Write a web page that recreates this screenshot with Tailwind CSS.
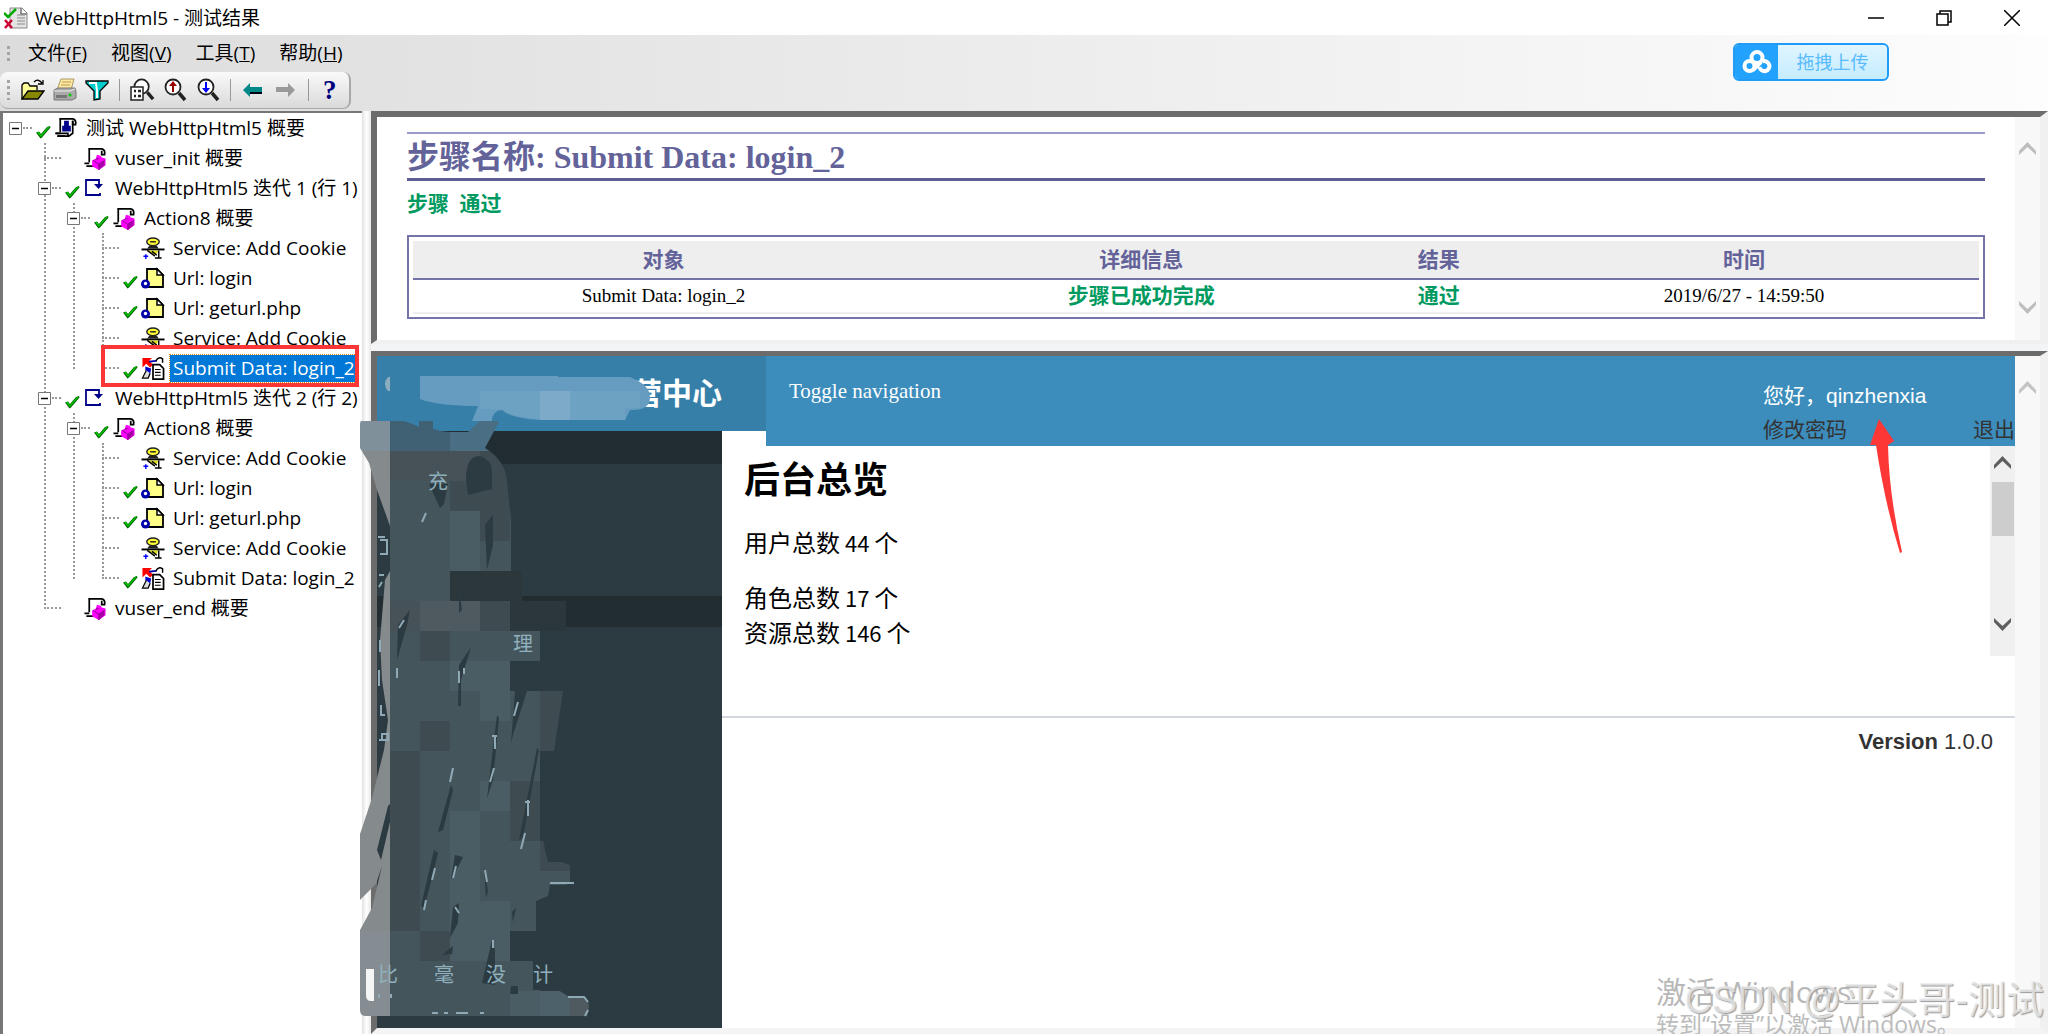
<!DOCTYPE html>
<html lang="zh-CN">
<head>
<meta charset="utf-8">
<title>WebHttpHtml5 - 测试结果</title>
<script src="https://cdn.jsdelivr.net/npm/@tailwindcss/browser@4"></script>
</head>
<body class="h-screen flex flex-col overflow-hidden relative bg-gray-100 text-black font-['Open_Sans','Noto_Sans_CJK_SC',sans-serif]">

<svg class="hidden" aria-hidden="true">
  <symbol id="check" viewBox="0 0 15 13"><path d="M0 6.500l3-1 2 2.500 6-7 3-1 .5 1.500-8.500 10-1.500 1z" fill="#060"/><path d="M1 6.200l2-.2 2 3 7-8 2-.5-9 10.500z" fill="#0c0"/></symbol>
  <symbol id="scroll" viewBox="0 0 24 24"><path d="M6 2h11v15H6z" fill="#fff"/><path d="M6 2v14M5 2h14q4 1 3 6h-3V4M1 17h5M3 20h8" fill="none" stroke="#000" stroke-width="1.800"/></symbol>
  <symbol id="run" viewBox="0 0 24 24"><use href="#scroll"/><path d="M10 4h5v5h2v6H8V9h2z" fill="#00008b"/><path d="M19 4v13l-4 3H3M1 17h13v3" fill="none" stroke="#000" stroke-width="1.800"/></symbol>
  <symbol id="action" viewBox="0 0 24 24"><use href="#scroll"/><path d="M9 14l4-2 1-4 4 1 1 2 4 1v7l-7 5-7-4z" fill="#f0f"/><path d="M16 18l6-4v5l-6 5zM12 14l2-3 3 1z" fill="#a0a"/><path d="M10 14l6 4 6-4M16 18v6" fill="none" stroke="#808"/></symbol>
  <symbol id="iter" viewBox="0 0 24 23"><path d="M14 3H3v15h14v-2" fill="none" stroke="#00008b" stroke-width="1.800"/><path d="M11 3h5v6" fill="none" stroke="#00008b" stroke-width="1.800"/><path d="M11 7h9l-4.500 5z" fill="#00008b"/></symbol>
  <symbol id="service" viewBox="0 0 24 24"><ellipse cx="12" cy="5" rx="6.500" ry="4" fill="#ff3" stroke="#222" stroke-width="1.500"/><path d="M9 5h6" stroke="#222" stroke-width="1.500"/><path d="M8 9h8l2 3H6z" fill="#222"/><path d="M0 13h24" stroke="#000" stroke-width="2"/><path d="M6 14h12l-3 5-6-3z" fill="#dd2"/><path d="M6 14l8 6M11 15l5 4M18 14v8M14 22h7" stroke="#000" stroke-width="1.500"/><path d="M2 20h5M4.500 18v5" stroke="#00f" stroke-width="1.500"/></symbol>
  <symbol id="url" viewBox="0 0 24 23"><path d="M6 2h10l6 6v12H6z" fill="#ff8" stroke="#000" stroke-width="1.800"/><path d="M16 2v6h6z" fill="#fff" stroke="#000" stroke-width="1.500"/><circle cx="4.500" cy="17" r="4.500" fill="#00a"/><circle cx="4.500" cy="16.500" r="1.700" fill="#fff"/></symbol>
  <symbol id="submit" viewBox="0 0 24 24"><path d="M1 1h10L8 4l4 4-3 3-4-4-4 4z" fill="red"/><path d="M8 5q5-1 8-1" stroke="#00a" fill="none" stroke-width="2"/><path d="M15 4q3-5 7-2v4" fill="none" stroke="#000" stroke-width="1.500"/><path d="M4 10l6 2-1 6-5-4z" fill="#00c"/><path d="M5 14l-4 8h6l2-5" fill="#ddd" stroke="#000" stroke-width="1.300"/><path d="M12 8h7l4 4v11H12z" fill="#fff" stroke="#000" stroke-width="1.800"/><path d="M14 13h6M14 16h6M14 19h6" stroke="#000" stroke-width="1.200"/></symbol>
  <symbol id="minus" viewBox="0 0 13 13"><path d="M.5.5h12v12H.5z" fill="#fff" stroke="#777"/><path d="M3 6.500h7" stroke="#000" stroke-width="1.500"/></symbol>
  <symbol id="lens" viewBox="0 0 24 24"><circle cx="10" cy="9" r="7.500" fill="#fff" stroke="#222" stroke-width="1.800"/><path d="M16 15l6 7" stroke="#222" stroke-width="3.500"/></symbol>
  <symbol id="up" viewBox="0 0 17 14"><path d="M0 13V9l8.500-9L17 9v4L8.500 5z"/></symbol>
  <symbol id="down" viewBox="0 0 17 14"><path d="M0 1v4l8.500 9L17 5V1L8.500 9z"/></symbol>
</svg>

<header class="h-[35px] shrink-0 bg-white flex items-center">
  <svg class="ml-1 w-6 h-6 shrink-0" viewBox="0 0 24 24"><path d="M6 2h12l5 5v15H6z" fill="#e4e4e4" stroke="#888"/><path d="M17 2v6h6" fill="#fff" stroke="#777" stroke-width="1.500"/><path d="M13 9h8M13 12h8M13 15h8M13 18h8" stroke="#888"/><path d="M0 7l4 4 8-8" fill="none" stroke="#0a0" stroke-width="2.500"/><path d="M1 14l7 8M8 14l-7 8" stroke="#c03" stroke-width="2.500"/></svg>
  <h1 class="ml-[7px] text-[19px] leading-6">WebHttpHtml5 - 测试结果</h1>
  <div class="ml-auto flex items-center gap-[52px] pr-7">
    <button aria-label="最小化" class="w-4 h-4"><svg class="w-4 h-4" viewBox="0 0 16 16"><path d="M0 8h16" stroke="#000" stroke-width="1.500"/></svg></button>
    <button aria-label="还原" class="w-4 h-4"><svg class="w-4 h-4" viewBox="0 0 16 16"><path d="M1 4h11v11H1zM4 4V1h11v11h-3" fill="none" stroke="#000" stroke-width="1.500"/></svg></button>
    <button aria-label="关闭" class="w-4 h-4"><svg class="w-4 h-4" viewBox="0 0 16 16"><path d="M0 0l16 16M16 0L0 16" stroke="#000" stroke-width="1.500"/></svg></button>
  </div>
</header>

<div class="h-[76px] shrink-0 bg-linear-to-r from-[#dcdcdc] to-[#fdfdfd] relative">
  <nav class="h-[37px] flex items-center text-[19px] pl-[7px]">
    <svg class="w-[3px] h-4 mr-[18px]" viewBox="0 0 3 16"><path d="M1.500 0v16" stroke="#a5a5a5" stroke-width="3" stroke-dasharray="3 3"/></svg>
    <div class="flex gap-6">
      <button>文件(<u>F</u>)</button><button>视图(<u>V</u>)</button><button>工具(<u>T</u>)</button><button>帮助(<u>H</u>)</button>
    </div>
  </nav>
  <div class="h-[37px] w-[351px] rounded-lg bg-linear-to-b from-[#fafafa] to-[#dadada] border-r-2 border-b border-[#a8a8a8] flex items-center pl-[7px]">
    <svg class="w-[3px] h-5 mr-[11px]" viewBox="0 0 3 20"><path d="M1.500 0v20" stroke="#a5a5a5" stroke-width="3" stroke-dasharray="3 3"/></svg>
    <button aria-label="打开"><svg class="w-6 h-6" viewBox="0 0 24 24"><path d="M1 21V7l2-2h4l2 3h7v4" fill="#ff9" stroke="#000" stroke-width="1.300"/><path d="M1 21l6-8h16l-6 8z" fill="#880" stroke="#000" stroke-width="1.300"/><path d="M13 4q4-4 8 1M22 2v4h-5" fill="none" stroke="#000" stroke-width="1.300"/></svg></button>
    <button aria-label="打印" class="ml-2"><svg class="w-6 h-6" viewBox="0 0 24 24"><path d="M8 1h13l-3 11H4z" fill="#ffe8a0" stroke="#a96"/><path d="M9 4h9M8 7h9" stroke="#b95"/><path d="M1 12l4-2h17l1 4v6l-4 2H1z" fill="#aaa" stroke="#777"/><path d="M1 13h16l5-2" stroke="#eee" fill="none"/><path d="M3 17h11v3H3z" fill="#777"/><circle cx="17" cy="17" r="1.500" fill="#0c0"/></svg></button>
    <button aria-label="筛选" class="ml-2"><svg class="w-6 h-6" viewBox="0 0 24 24"><path d="M1 3h22v2l-8 8v8l-6 1v-9L1 5z" fill="#0cc" stroke="#000" stroke-width="1.300"/><path d="M4 5h7l1 8v7" stroke="#fff" stroke-width="2" fill="none"/></svg></button>
    <span class="w-px h-[22px] bg-[#999] mx-[10px]"></span>
    <button aria-label="查找"><svg class="w-[25px] h-6" viewBox="0 0 25 24"><use href="#lens" x="2" width="23" height="23"/><path d="M1 9h12v13H1z" fill="#fff" stroke="#222" stroke-width="1.500"/><path d="M4 13h2M8 13h3M4 18h2M8 18h3" stroke="#222" stroke-width="2.500"/></svg></button>
    <button aria-label="查找上一个" class="ml-2"><svg class="w-6 h-6" viewBox="0 0 24 24"><use href="#lens"/><path d="M10 3l-4 5h3v6h2V8h3z" fill="#900"/></svg></button>
    <button aria-label="查找下一个" class="ml-[9px]"><svg class="w-6 h-6" viewBox="0 0 24 24"><use href="#lens"/><path d="M10 15l-4-5h3V4h2v6h3z" fill="#00f"/></svg></button>
    <span class="w-px h-[22px] bg-[#999] mx-[10px]"></span>
    <button aria-label="后退" class="ml-[2px]"><svg class="w-5 h-4" viewBox="0 0 20 16"><path d="M0 8l7-7v4h12v5H7v5z" fill="#088"/><path d="M7 10h12v2H7z" fill="#001"/></svg></button>
    <button aria-label="前进" class="ml-[13px]"><svg class="w-5 h-4" viewBox="0 0 20 16"><path d="M19 8l-7-7v4H0v5h12v5z" fill="#999"/></svg></button>
    <span class="w-px h-[22px] bg-[#999] ml-3 mr-[14px]"></span>
    <button aria-label="帮助" class="font-['Liberation_Serif',serif] font-bold text-[27px] leading-7 text-[#00007f]">?</button>
  </div>
  <button class="absolute right-[159px] top-[8px] w-[156px] h-[38px] rounded-md border-2 border-[#219bf8] overflow-hidden flex items-stretch text-lg text-[#58bbfb] bg-linear-to-b from-[#e0f5ff] to-[#c5ecff]">
    <span class="w-[43px] bg-[#22a2fd] flex items-center justify-center"><svg class="w-[30px] h-6" viewBox="0 0 30 24" fill="none" stroke="#fff" stroke-width="4"><circle cx="15" cy="7.500" r="5.500"/><circle cx="7.500" cy="16" r="5"/><path d="M11 20l8-8M17.500 17a5 5 0 1 0 3-5.500"/></svg></span>
    <span class="flex-1 flex items-center justify-center">拖拽上传</span>
  </button>
</div>

<main class="flex-1 min-h-0 flex">
  <aside class="w-[362px] shrink-0 bg-white border-l-[3px] border-t-2 border-[#777] relative text-[19px] whitespace-nowrap" aria-label="结果树">
    <ul id="tree" class="-ml-[3px]"></ul>
    <div class="absolute left-[98px] top-[232px] w-[258px] h-[42px] border-4 border-[#fb3636]"></div>
  </aside>
  <div class="w-[9px] shrink-0 bg-linear-to-r from-[#e2e2e2] via-white to-[#e8e8e8]"></div>

  <div class="flex-1 min-w-0 flex flex-col">
    <section class="h-[233px] shrink-0 bg-white border-t-[6px] border-l-[6px] border-r-[8px] border-b-[4px] border-t-[#6c6c6c] border-l-[#6c6c6c] border-r-[#f0f0f0] border-b-[#f0f0f0] flex">
      <div class="flex-1 min-w-0 px-[30px] pt-[15px] font-['Liberation_Serif','Noto_Sans_CJK_SC',serif]">
        <h2 class="h-[49px] border-t-2 border-b-[3px] border-t-[#9a9acb] border-b-[#5e5e96] text-[32px] leading-[46px] font-bold text-[#63639a]">步骤名称: Submit Data: login_2</h2>
        <p class="mt-[7px] h-8 text-[21px] leading-8 font-bold text-[#009a61]">步骤&nbsp; 通过</p>
        <div class="mt-[15px] h-[84px] border-2 border-[#7474a8] p-1">
          <table class="w-full table-fixed text-center border-collapse">
            <thead><tr class="h-[38px] bg-[#eeeeee] border-b-2 border-[#7474a8] text-[21px] leading-8 text-[#63639a]"><th class="w-[32%]">对象</th><th class="w-[29%]">详细信息</th><th class="w-[9%]">结果</th><th>时间</th></tr></thead>
            <tbody><tr class="h-[34px] border-b-2 border-[#eee] text-[19px] leading-7"><td>Submit Data: login_2</td><td class="font-bold text-[21px] text-[#009a61]">步骤已成功完成</td><td class="font-bold text-[21px] text-[#009a61]">通过</td><td>2019/6/27 - 14:59:50</td></tr></tbody>
          </table>
        </div>
      </div>
      <div class="w-[25px] shrink-0 bg-[#f8f8f8] flex flex-col items-center justify-between pt-[25px] pb-[26px] fill-[#bdbdbd]">
        <svg class="w-[17px] h-[14px]"><use href="#up"/></svg><svg class="w-[17px] h-[14px]"><use href="#down"/></svg>
      </div>
    </section>

    <section class="mt-[7px] flex-1 min-h-0 relative bg-white border-t-[5px] border-l-[6px] border-r-[8px] border-b-[6px] border-t-[#6c6c6c] border-l-[#6c6c6c] border-r-[#f0f0f0] border-b-[#f4f4f4] flex">
      <div class="flex-1 min-w-0 flex flex-col font-['Liberation_Serif','Noto_Sans_CJK_SC',serif]">
        <div class="h-[90px] shrink-0 flex">
          <div class="w-[389px] shrink-0 flex flex-col">
            <div class="h-[75px] bg-[#367fa9] text-white text-[30px] font-bold flex items-center justify-end pr-[44px]">营中心</div>
            <div class="h-[15px] w-[345px] bg-[#222d32]"></div>
          </div>
          <div class="flex-1 bg-[#3c8dbc] flex justify-between text-[21px] leading-[34px]">
            <a href="#" class="text-white ml-[23px] mt-[18px]">Toggle navigation</a>
            <div class="w-[252px] mt-[23px] font-['Liberation_Sans','Noto_Sans_CJK_SC',sans-serif]">
              <p class="text-white">您好，qinzhenxia</p>
              <p class="flex justify-between text-[#333]"><a href="#">修改密码</a><a href="#">退出</a></p>
            </div>
          </div>
        </div>
        <div class="flex-1 min-h-0 flex">
          <div class="w-[345px] shrink-0 flex flex-col"><div class="h-[18px] bg-[#222d32]"></div><div class="h-[132px] bg-[#2c3b41]"></div><div class="h-[31px] bg-[#222d32]"></div><div class="flex-1 bg-[#2c3b41]"></div></div>
          <div class="flex-1 flex flex-col">
            <div class="h-[210px] flex justify-between">
              <div class="pl-[22px] text-[24px] leading-[35px] font-['Noto_Sans_CJK_SC',sans-serif]">
                <h2 class="text-[36px] leading-[50px] font-bold mt-[6px]">后台总览</h2>
                <p class="mt-[22px] whitespace-pre">用户总数<span class="text-[22px] leading-none"> 44 </span>个</p>
                <p class="mt-5 whitespace-pre">角色总数<span class="text-[22px] leading-none"> 17 </span>个<br>资源总数<span class="text-[22px] leading-none"> 146 </span>个</p>
              </div>
              <div class="w-[25px] bg-[#f0f0f0] flex flex-col items-center pt-[10px] pb-[25px] fill-[#5f5f5f]">
                <svg class="w-[17px] h-[14px] shrink-0"><use href="#up"/></svg>
                <div class="w-[22px] h-[54px] mt-3 mb-auto bg-[#cdcdcd]"></div>
                <svg class="w-[17px] h-[14px] shrink-0"><use href="#down"/></svg>
              </div>
            </div>
            <footer class="mt-[60px] border-t-2 border-[#d2d6de] pt-2 pr-[22px] text-right text-[22px] leading-8 text-[#333] font-['Liberation_Sans',sans-serif]"><b>Version</b> 1.0.0</footer>
          </div>
        </div>
      </div>
      <div class="w-[25px] shrink-0 bg-[#f8f8f8] flex justify-center pt-[25px] fill-[#c4c4c4]"><svg class="w-[17px] h-[14px]"><use href="#up"/></svg></div>

      <svg id="mosaic" class="absolute -left-[17px] top-[19px] w-[390px] h-[645px]" viewBox="360 375 390 645"></svg>
      <svg class="absolute right-[137px] top-[63px] w-[34px] h-[134px]" viewBox="0 0 34 134"><path d="M10 0l15 22-6 4q1 50 14 107l-2 1Q16 85 7 26H1z" fill="#fd3636"/></svg>
    </section>
  </div>
</main>

<div class="absolute right-0 bottom-0 w-[400px] h-[62px] overflow-hidden whitespace-nowrap pointer-events-none">
  <p class="absolute left-2 top-0 text-[30px] leading-10 text-[#b8b8b8]">激活 Windows</p>
  <p class="absolute left-2 top-[36px] text-[23px] leading-8 text-[#bcbcbc]">转到“设置”以激活 Windows。</p>
  <p class="absolute right-1 top-1 text-[38px] leading-[48px] font-['Liberation_Sans','Noto_Sans_CJK_SC',sans-serif] text-[#ececec]/80 [text-shadow:1px_1px_1px_#999]">CSDN @平头哥-测试</p>
</div>

<script>
const leaves = [['service','Service: Add Cookie'],['url','Url: login',1],['url','Url: geturl.php',1],['service','Service: Add Cookie'],['submit','Submit Data: login_2',1]];
const iteration = (n) => ['iter', `WebHttpHtml5 迭代 ${n} (行 ${n})`, 1, [['action','Action8 概要',1,leaves.map((l,i)=>[l[0],l[1],l[2],null,n===1&&i===4])]]];
const data = [['run','测试 WebHttpHtml5 概要',1,[['action','vuser_init 概要'],iteration(1),iteration(2),['action','vuser_end 概要']]]];
function node([icon,label,ok,kids,selected]) {
  const stub = kids
    ? '<button aria-label="折叠" class="w-[13px] h-[13px] ml-[9px] shrink-0"><svg class="w-[13px] h-[13px]"><use href="#minus"/></svg></button><span class="w-[9px] ml-px border-t-2 border-dotted border-[#999]"></span>'
    : '<span class="w-[17px] ml-[15px] border-t-2 border-dotted border-[#999]"></span>';
  const tick = ok ? '<svg class="w-[15px] h-[13px] mt-[9px]"><use href="#check"/></svg>' : '';
  const text = selected
    ? `<span class="bg-[#0078d7] text-white outline-1 outline-dotted outline-[#d80] h-[27px] leading-[26px] px-[3px] -ml-[3px]">${label}</span>`
    : `<span class="leading-[26px]">${label}</span>`;
  const sub = kids ? `<ul class="ml-[29px] relative"><span class="absolute left-[15px] top-0 bottom-[14px] border-l-2 border-dotted border-[#999]"></span>${kids.map(node).join('')}</ul>` : '';
  return `<li><div class="h-[30px] flex items-center relative">${stub}<span class="w-[15px] ml-[4px] mr-px shrink-0">${tick}</span><svg class="w-6 h-[23px] ml-[2px] mr-2 shrink-0"><use href="#${icon}"/></svg>${text}</div>${sub}</li>`;
}
document.getElementById('tree').innerHTML = data.map(node).join('');

/* Scribbled mosaic that hides the site name and its menu */
const tones = {a:'#80909a',b:'#858a8d',c:'#406073',d:'#4a6f84',e:'#465257',f:'#3e4c52',g:'#44555c',h:'#4a5d65',i:'#40505a',j:'#2c373c',k:'#4f5a60',l:'#4d616b',n:'#858d92'};
const rows = ['accddcc','beeefff','bggfffg','bgghfgg','bgghgg.','bggjjjjj','bekkfjj','bgfgggh','bgghhhj.','bggghgff','bgfgggff','bfgggg','bfgghf','bfghgf','bfghggf','bfghggg','bfghhg','ngfhhj','nggggg','ngggghlk'];
const tiles = rows.map((r,y)=>[...r].map((c,x)=>tones[c]?`<rect x="${360+x*30}" y="${421+y*30}" width="30" height="30" fill="${tones[c]}"/>`:'').join('')).join('');
document.getElementById('mosaic').innerHTML = `
<clipPath id="brush"><path d="M360 424q0-4 4-4h32q12 1 23 7v-6q6-4 14 0v8q10 3 17 3h18l12-11 20-1-15 28Q505 460 507 481L511 520V571H522V601H566V631H540V661H510V691H563L554 751H540V821L545 850L548 862H562L578 868Q574 882 566 885H550L548 896L536 901V931H510V961H533V990H558L568 996H584Q592 1002 587 1016H366Q360 1016 360 1010V930L372 908L382 866L376 884L360 900V834L372 798L384 750L388 720L382 680L380 640L385 580L390 571V526L377 490L369 463L360 448z"/></clipPath>
<g clip-path="url(#brush)">${tiles}</g>
<path d="M420 376h138v1h72q20 8 20 20 0 14-20 13l-5 10h-85q-30-2-38-10-10 1-10 11h-20l6-15q-40 0-58-7z" fill="#659cbf"/>
<path d="M540 391h30v29h-30z" fill="#7caac8"/><path d="M570 391h70v17h-15v12h-55zM480 391h60v28q-30-2-38-10h-22z" fill="#6ea2c2"/>
<path d="M388 377q-6 7 0 14h2v-14z" fill="#8cadbf"/>
<g fill="#2c3b41"><path d="M429 484h19l-4 20-4 4zM466 480q0-25 14-24 12 4 12 15v18l-24 6zM485 525l8-10v30l-6 25zM459 590l3 20-3 3zM398 625l12-15-3 15-10 35zM459 665l12-18-10 33v26h-3zM515 691h12l-14 44-2 8zM497 715l2 3-6 62-6 18zM451 785l2 5-10 40-5 2zM537 748l2 2-16 88-4 2zM388 806l2-2v18l-9 38-4-10zM434 850l4 3-6 25-8 30-3-2zM455 855l8 2-9 18-3 4zM484 866l4 25-2 7zM453 907l6-4-1 20-8 15zM492 940l3 10v35l-13-2zM512 912l4-4-3 14zM448 950l5-4-1 8-10 1zM511 986h7v8h-8z"/></g>
<g stroke="#8fa9b6" stroke-width="2" fill="none"><path d="M378 537h7M380 540h7v14h-7M379 575h5M382 582l-3 5M380 640v12M379 670v16M381 705v10h4M379 740h9v-6h-6v6M426 513l-4 9M404 620l-5 8M459 671v12M464 668v6M397 668v10M518 702l-4 14M495 735v14M492 736h5M494 768l-4 14M453 768l-3 14M528 800v16M525 802h5M525 833l-4 16M435 868l-3 12M456 866l-3 12M485 870l2 12M550 883h24M426 900l-2 10M455 907l4 6M493 940v8M568 997h16l4 5M588 1010l-3 6M432 1013h6M444 1013h4M456 1013h12M480 1013h4M379 998v-4M391 998v-4"/></g>
<g fill="#8fb0bc" font-family="Noto Sans CJK SC" font-size="20"><text x="513" y="651">理</text><text x="428" y="489">充</text><text x="378" y="982">比</text><text x="434" y="982">毫</text><text x="486" y="982">没</text><text x="533" y="982">计</text></g>
<path d="M374 969h-8v26q0 6 5 6h3z" fill="#f5f5f5"/>`;
</script>
</body>
</html>
